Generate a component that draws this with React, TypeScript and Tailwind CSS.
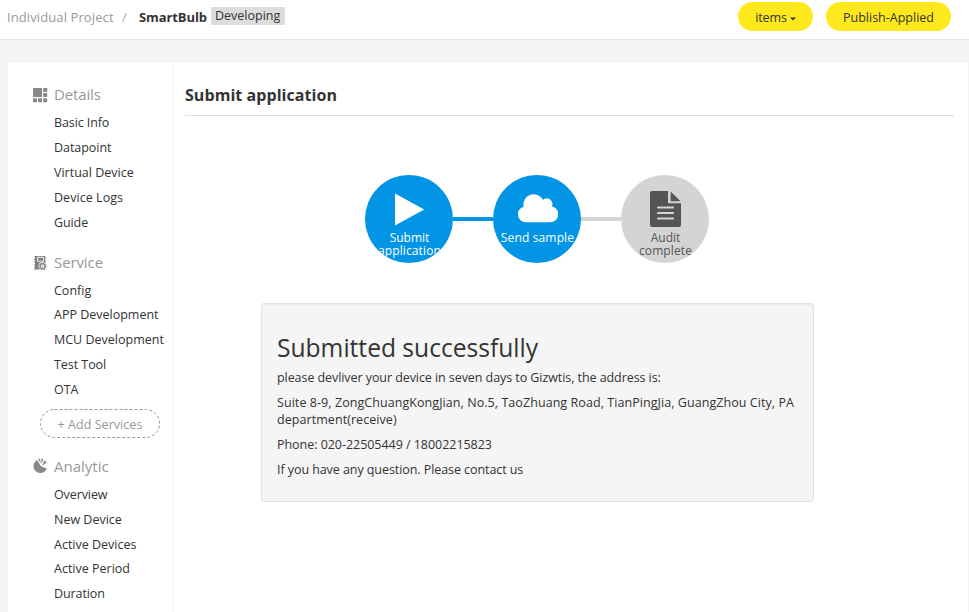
import type { ReactNode } from 'react';

type Item = { label: string; track?: string };

function GridIcon() {
  return (
    <svg width="15" height="15" viewBox="0 0 15 15" fill="#888888" className="block">
      <rect x="0" y="0" width="9" height="9" />
      <rect x="10.2" y="0" width="4" height="4" rx="0.6" />
      <rect x="10.2" y="5" width="4" height="4" rx="0.6" />
      <rect x="0" y="10.2" width="4" height="4" rx="0.6" />
      <rect x="5" y="10.2" width="4" height="4" rx="0.6" />
      <rect x="10.2" y="10.2" width="4" height="4" rx="0.6" />
    </svg>
  );
}

function ServiceIcon() {
  return (
    <svg width="15" height="16" viewBox="0 0 15 16" className="-mt-px block">
      <path d="M2 1h10.5v13.5H2z" fill="#808080" />
      <path d="M1 2h1.5M1 4.5h1.5M1 7h1.5M1 9.5h1.5M1 12h1.5M1 14h1.5" stroke="#888888" strokeWidth="1" />
      <path d="M4.6 2.3v3.9h6v-3.9z" fill="none" stroke="#fff" strokeWidth="0.9" />
      <circle cx="9.6" cy="11.2" r="4.2" fill="#fff" />
      <circle cx="9.6" cy="11.2" r="2.5" fill="none" stroke="#888888" strokeWidth="1.5" />
      <circle cx="9.6" cy="11.2" r="3.6" fill="none" stroke="#888888" strokeWidth="1" strokeDasharray="1.4 1.43" />
      <circle cx="9.6" cy="11.2" r="0.8" fill="#888888" />
    </svg>
  );
}

function PieIcon() {
  return (
    <svg width="15" height="16" viewBox="0 0 15 16" fill="#888888" className="mt-px block">
      <path d="M4.1 2A6.9 6.9 0 1 0 13.8 10.6L8.2 8.6z" />
      <path d="M5.2 1A7 7 0 0 1 7 0.5L7.7 5.8z" />
      <path d="M8.2 0.5L10.4 0.9L8.5 6z" />
      <path d="M11.6 2.2L13.8 4.6L8.9 8z" />
    </svg>
  );
}

function Section({ icon, title, titleClass, listClass, items }: { icon: ReactNode; title: string; titleClass: string; listClass: string; items: Item[] }) {
  return (
    <div>
      <div className="flex h-6 items-center pl-[25px] text-[15px] text-[#999999]">
        <span className="w-[21px] shrink-0">{icon}</span>
        <span className={titleClass}>{title}</span>
      </div>
      <ul className={`pl-[46px] text-[12.5px] whitespace-nowrap ${listClass}`}>
        {items.map((i) => (
          <li key={i.label} className={i.track}>{i.label}</li>
        ))}
      </ul>
    </div>
  );
}

function Step({ tone, icon, children }: { tone: string; icon: ReactNode; children: ReactNode }) {
  return (
    <div className={`flex size-22 flex-col items-center overflow-hidden rounded-full text-center text-[12px] leading-[13px] whitespace-nowrap ${tone}`}>
      <div className="h-14 shrink-0">{icon}</div>
      <div className="w-full shrink-0 pl-px">{children}</div>
    </div>
  );
}

export default function App() {
  return (
    <div className="flex h-[612px] w-[969px] flex-col overflow-hidden bg-[#f5f5f5] font-['Open_Sans','Noto_Sans',sans-serif] text-[12.5px] text-[#333333]">
      <header className="flex h-10 shrink-0 items-start border-b border-[#e7e7e7] bg-white pl-[7px] whitespace-nowrap">
        <div className="flex h-9 items-center">
          <span className="w-[115px] text-[13px] tracking-[0.1px] text-[#999999]">Individual Project</span>
          <span className="w-[17px] text-[13px] text-[#aaaaaa]">/</span>
          <span className="w-[72px] text-[13px] font-bold tracking-[-0.1px]">SmartBulb</span>
        </div>
        <span className="mt-[7px] h-[18px] w-[74px] bg-[#dddddd] pl-1 text-[12.5px] leading-[18px]">Developing</span>
        <div className="mt-[2px] ml-auto flex gap-[13px] pr-[18px] leading-[31px]">
          <button className="flex h-[29px] w-[75px] items-center justify-center gap-[3px] rounded-full bg-[#ffe91c] pt-[2px]">
            <span className="tracking-[-0.15px]">items</span>
            <svg width="6" height="4" viewBox="0 0 6 4" className="mt-[2px]"><path d="M0 0.5h6L3 3.6z" fill="#333" /></svg>
          </button>
          <button className="h-[29px] w-[125px] rounded-full bg-[#ffe91c]">Publish-Applied</button>
        </div>
      </header>

      <div className="mt-[23px] ml-2 flex w-[960px] grow rounded-t bg-white">
        <aside className="w-[165px] shrink-0 border-r border-[#f3f3f3] pt-5">
          <Section
            icon={<GridIcon />}
            title="Details"
            titleClass="pb-[2px] tracking-[-0.15px]"
            listClass="mt-[3px] leading-[25px]"
            items={[
              { label: 'Basic Info', track: 'tracking-[-0.1px]' },
              { label: 'Datapoint', track: 'tracking-[-0.05px]' },
              { label: 'Virtual Device' },
              { label: 'Device Logs', track: 'tracking-[0.05px]' },
              { label: 'Guide', track: 'tracking-[-0.1px]' },
            ]}
          />
          <div className="mt-4">
            <Section
              icon={<ServiceIcon />}
              title="Service"
              titleClass="pb-[2px] tracking-[-0.1px]"
              listClass="mt-[3.6px] leading-[24.8px]"
              items={[
                { label: 'Config' },
                { label: 'APP Development' },
                { label: 'MCU Development' },
                { label: 'Test Tool', track: 'tracking-[-0.05px]' },
                { label: 'OTA' },
              ]}
            />
          </div>
          <button className="mt-[6.4px] ml-8 block h-[29px] w-30 text-[#999999]">
            <span className="relative flex size-full items-center justify-center pt-[3px] tracking-[0.05px]">
              <svg width="120" height="29" className="absolute inset-0">
                <rect x="0.5" y="0.5" width="119" height="28" rx="14" fill="none" stroke="#999999" strokeDasharray="3 2" />
              </svg>
              + Add Services
            </span>
          </button>
          <div className="mt-4">
            <Section
              icon={<PieIcon />}
              title="Analytic"
              titleClass=""
              listClass="mt-[5px] leading-[24.8px]"
              items={[
                { label: 'Overview', track: 'tracking-[-0.1px]' },
                { label: 'New Device' },
                { label: 'Active Devices' },
                { label: 'Active Period' },
                { label: 'Duration', track: 'tracking-[-0.1px]' },
              ]}
            />
          </div>
        </aside>

        <main className="flex grow flex-col pr-[14px] pl-3">
          <h1 className="h-[53px] w-full border-b border-[#dddddd] pt-5 text-[16px] leading-6 font-bold tracking-[0.06px]">Submit application</h1>

          <div className="mt-[59px] flex w-full items-center pl-[180px]">
            <Step
              tone="bg-[#0294e5] text-white"
              icon={<svg width="30" height="34" viewBox="0 0 30 34" className="mt-[18px] ml-[2px]"><path d="M0 0.5L29.2 16.5L0 32.5z" fill="#fff" /></svg>}
            >
              Submit<br />
              <span className="tracking-[0.1px]">application</span>
            </Step>
            <div className="h-1 w-10 bg-[#0294e5]" />
            <Step
              tone="bg-[#0294e5] text-white"
              icon={
                <svg width="40" height="30" viewBox="0 0 40 30" className="mt-[18px] ml-[2px]" fill="#fff">
                  <path d="M8 29.2A7.9 7.9 0 0 1 5.6 13.7A10.4 10.4 0 0 1 25 6.8A5.6 5.6 0 0 1 33.9 13.2A8.1 8.1 0 0 1 31.6 29.2z" />
                </svg>
              }
            >
              <span className="tracking-[0.15px]">Send sample</span>
            </Step>
            <div className="h-1 w-10 bg-[#d4d4d4]" />
            <Step
              tone="bg-[#d4d4d4] text-[#555555]"
              icon={
                <svg width="31" height="36" viewBox="0 0 31 36" className="mt-4">
                  <path d="M2 0H18V12.2H31V34a2 2 0 0 1-2 2H2a2 2 0 0 1-2-2V2a2 2 0 0 1 2-2z" fill="#555" />
                  <path d="M20.6 0.4L30.6 10.2H20.6z" fill="#555" />
                  <path d="M8 16.5H23M8 22H23M8 27.5H23" stroke="#d4d4d4" strokeWidth="2.2" strokeLinecap="round" />
                </svg>
              }
            >
              Audit<br /><span className="tracking-[0.1px]">complete</span>
            </Step>
          </div>

          <section className="mt-10 ml-[76px] h-[199px] w-[553px] rounded-[3px] border border-[#e1e1e1] bg-[#f5f5f5] px-[15px] pt-7 leading-[17px] whitespace-nowrap shadow-[inset_0_1px_1px_rgba(0,0,0,0.05)]">
            <h2 className="text-[24.6px] leading-8">Submitted successfully</h2>
            <p className="mt-[5px] tracking-[-0.07px]">please devliver your device in seven days to Gizwtis, the address is:</p>
            <p className="mt-2 tracking-[0.065px]">
              Suite 8-9, ZongChuangKongJian, No.5, TaoZhuang Road, TianPingJia, GuangZhou City, PA<br />department(receive)
            </p>
            <p className="mt-2 tracking-[-0.04px]">Phone: 020-22505449 / 18002215823</p>
            <p className="mt-2 tracking-[-0.07px]">If you have any question. Please contact us</p>
          </section>
        </main>
      </div>
    </div>
  );
}
